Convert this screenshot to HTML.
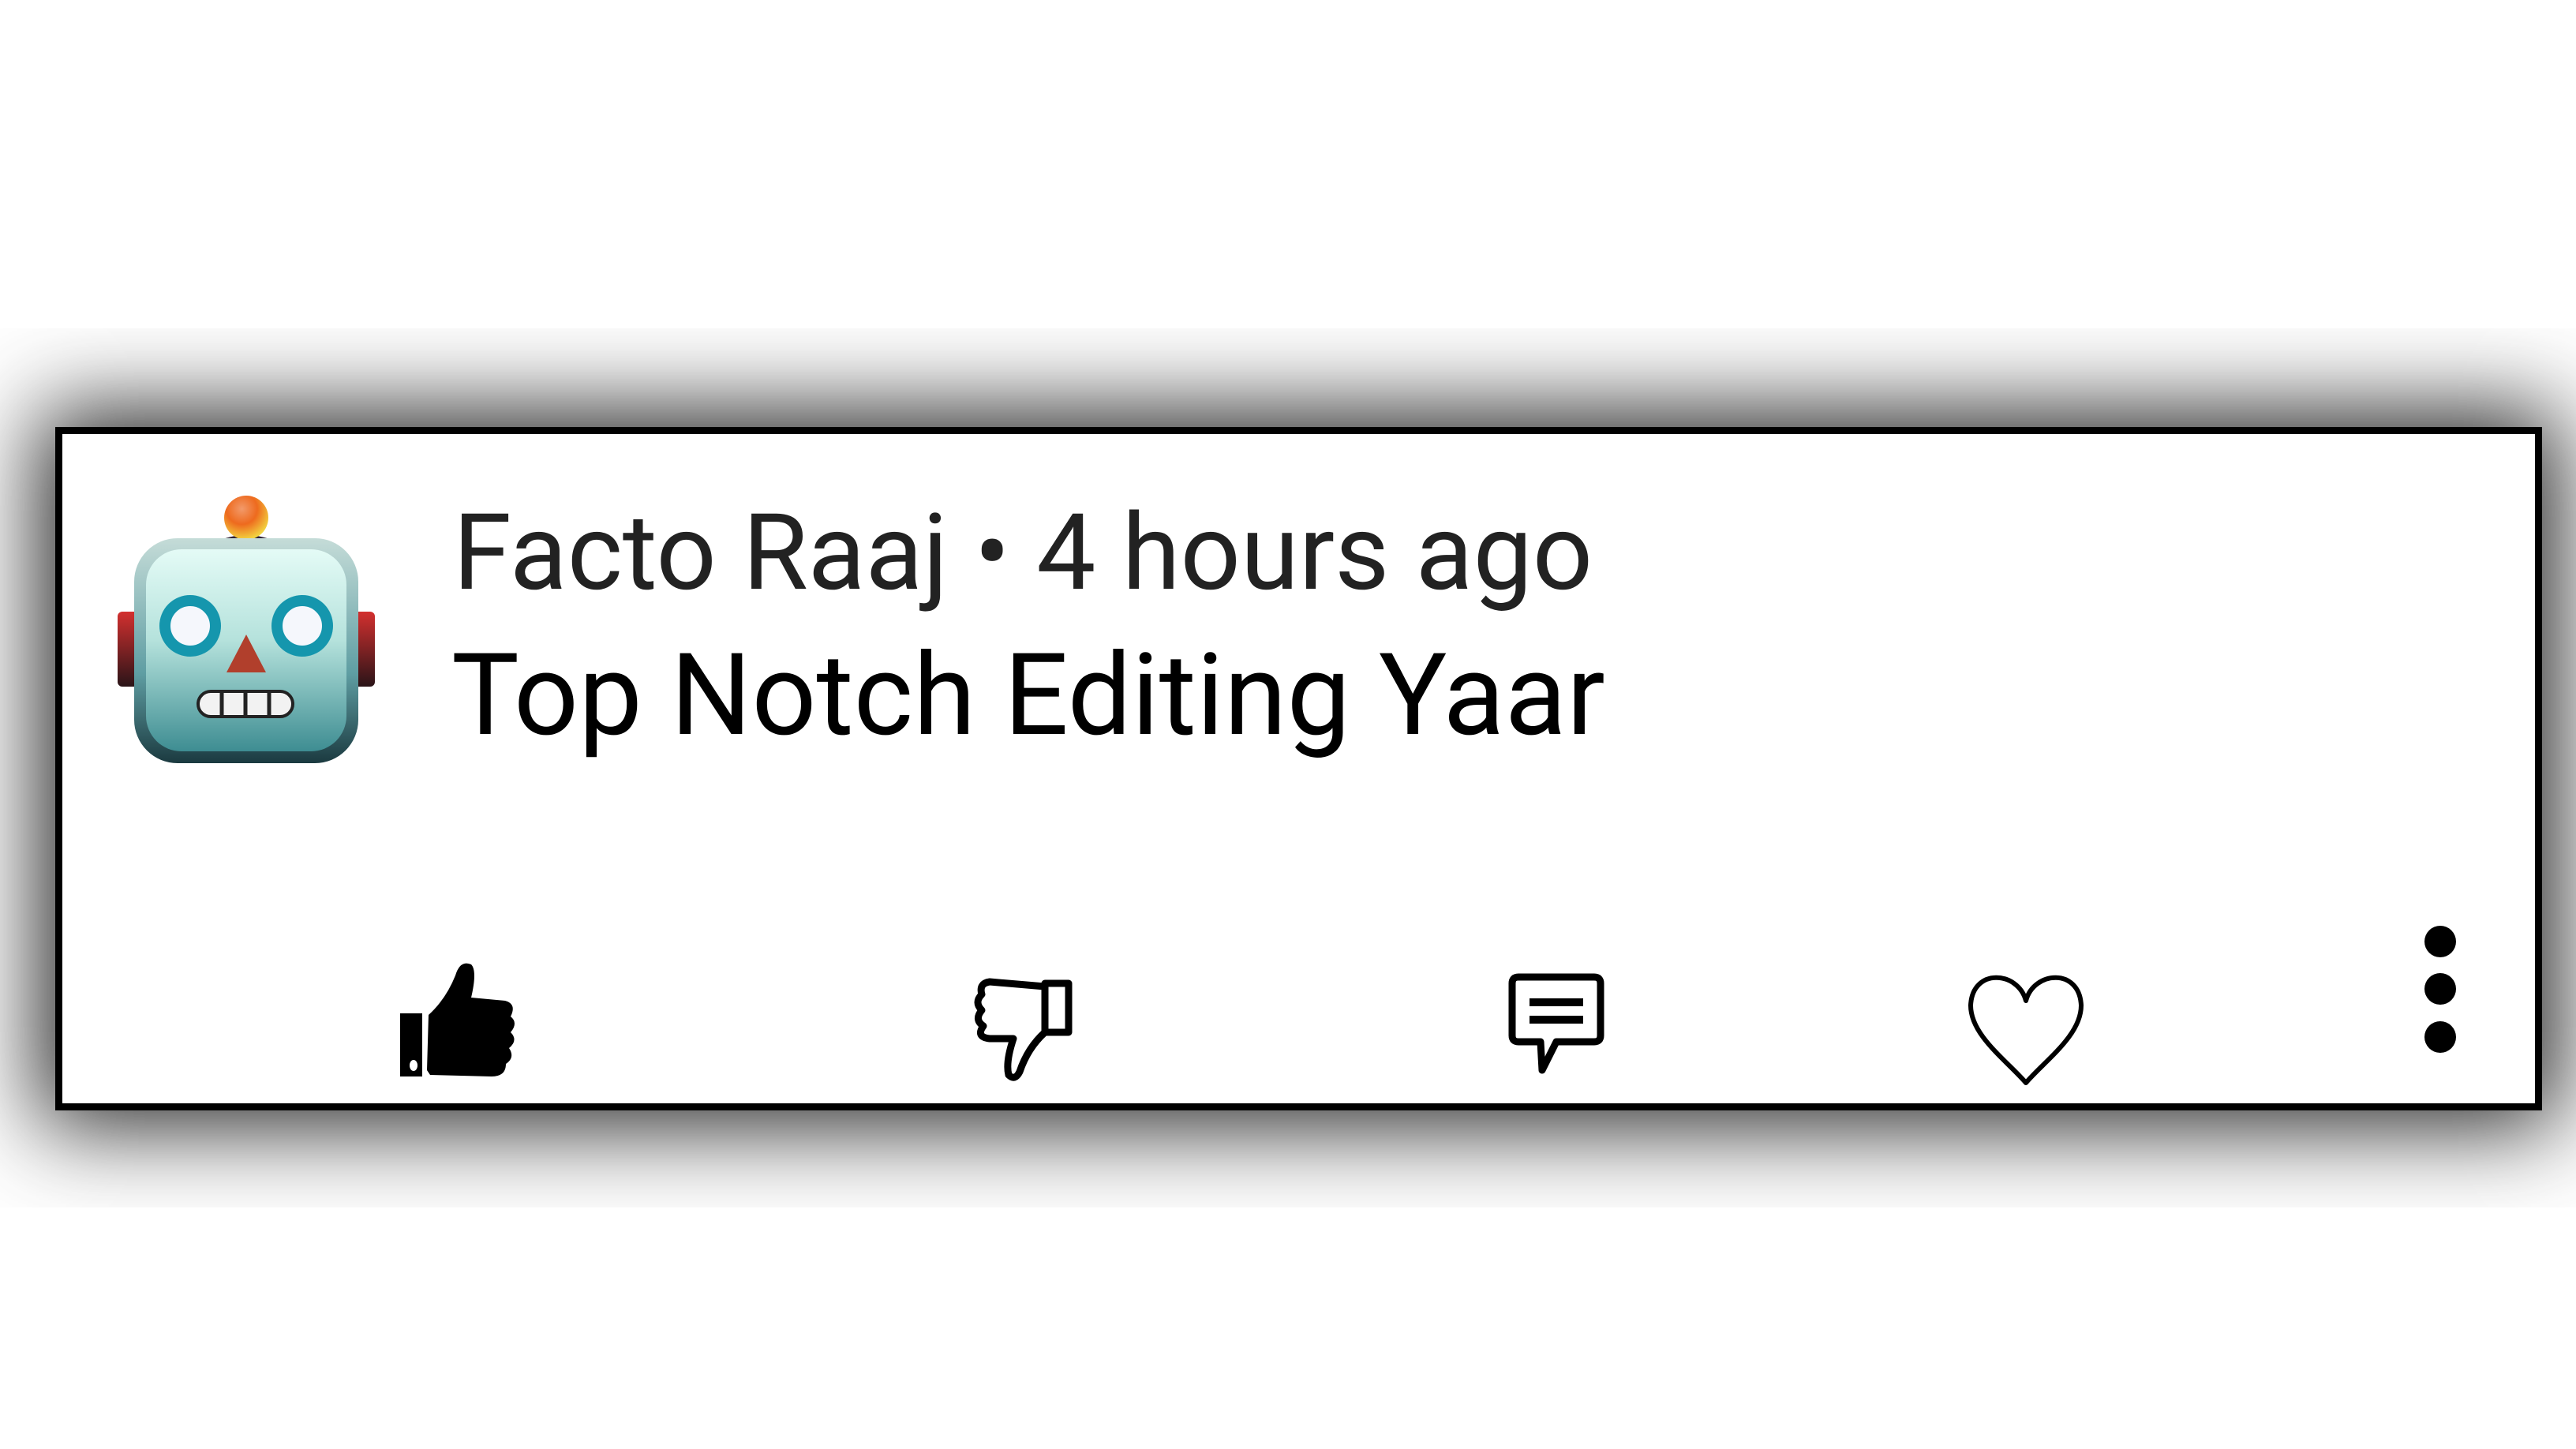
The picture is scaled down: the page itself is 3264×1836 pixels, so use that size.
<!DOCTYPE html>
<html><head><meta charset="utf-8"><style>
html,body{margin:0;padding:0;background:#fff;}
body{width:3264px;height:1836px;position:relative;overflow:hidden;font-family:"Roboto","Liberation Sans",sans-serif;}
.clip{position:absolute;left:0;top:416px;width:3264px;height:1114px;overflow:hidden;}
.card{position:absolute;left:70px;top:125px;width:3133px;height:848px;border:9px solid #000;background:#fff;box-shadow:0 0 110px 20px rgba(0,0,0,0.85);}
.t1{position:absolute;left:574px;top:634px;font-size:134px;color:#222;white-space:nowrap;line-height:1;}
.t2{position:absolute;left:572px;top:810px;font-size:144px;color:#000;white-space:nowrap;line-height:1;}
svg{position:absolute;}
</style></head><body>
<div class="clip"><div class="card"></div></div>

<svg style="left:145px;top:620px" width="335" height="350" viewBox="0 0 335 350">
<defs>
<linearGradient id="face" x1="0" y1="0" x2="0" y2="1"><stop offset="0" stop-color="#e4fbf6"/><stop offset="0.45" stop-color="#b5e2dc"/><stop offset="1" stop-color="#3e8d92"/></linearGradient>
<linearGradient id="rim" x1="0" y1="0" x2="0" y2="1"><stop offset="0" stop-color="#c5dcd8"/><stop offset="0.6" stop-color="#5f9ea3"/><stop offset="1" stop-color="#1b3a40"/></linearGradient>
<linearGradient id="ear" x1="0" y1="0" x2="0" y2="1"><stop offset="0" stop-color="#d3302f"/><stop offset="1" stop-color="#2a1418"/></linearGradient>
<radialGradient id="ball" cx="0.4" cy="0.3" r="0.7"><stop offset="0" stop-color="#f29a6a"/><stop offset="0.5" stop-color="#ee6a1e"/><stop offset="1" stop-color="#f2d440"/></radialGradient>
</defs>
<rect x="4" y="155" width="30" height="95" rx="6" fill="url(#ear)"/>
<rect x="300" y="155" width="30" height="95" rx="6" fill="url(#ear)"/>
<path d="M125 68 Q167 48 209 68 Q167 95 125 68Z" fill="#2e2236"/>
<circle cx="167" cy="36" r="28" fill="url(#ball)"/>
<rect x="25" y="62" width="284" height="285" rx="55" fill="url(#rim)"/>
<rect x="40" y="76" width="254" height="256" rx="45" fill="url(#face)"/>
<circle cx="96" cy="173" r="32" fill="#f5f7fc" stroke="#1596ad" stroke-width="14"/>
<circle cx="238" cy="173" r="32" fill="#f5f7fc" stroke="#1596ad" stroke-width="14"/>
<path d="M167 184 L192 232 L142 232Z" fill="#b13f2c"/>
<rect x="106" y="256" width="120" height="32" rx="16" fill="#f2f2f2" stroke="#222" stroke-width="4"/>
<path d="M136 258V286M166 258V286M196 258V286" stroke="#222" stroke-width="5"/>
</svg>

<div class="t1">Facto Raaj • 4 hours ago</div>
<div class="t2">Top Notch Editing Yaar</div>

<svg style="left:505px;top:1216px" width="152" height="150" viewBox="0 0 152 150">
<rect x="2" y="68" width="28" height="80" fill="#000"/>
<ellipse cx="19" cy="134" rx="5" ry="7" fill="#fff"/>
<path d="M38 70 Q60 50 72 20 Q78 0 92 6 Q100 14 92 48 L135 52 Q150 56 142 72 Q152 80 142 92 Q152 102 140 112 Q148 124 136 132 Q136 148 118 148 L40 146 L36 140Z" fill="#000"/>
</svg>
<svg style="left:1232px;top:1236px" width="130" height="134" viewBox="0 0 130 134">
<g fill="none" stroke="#000" stroke-width="9" stroke-linejoin="round">
<rect x="92" y="10" width="30" height="62"/>
<path d="M92 14 L22 8 Q8 10 12 24 Q2 34 12 44 Q2 56 14 64 Q4 78 22 80 L52 80 Q42 110 46 126 Q54 134 60 122 Q70 92 92 72"/>
</g>
</svg>
<svg style="left:1910px;top:1232px" width="124" height="134" viewBox="0 0 124 134">
<path d="M14 6 H110 Q118 6 118 14 V80 Q118 88 110 88 H62 L44 124 L42 88 H14 Q6 88 6 80 V14 Q6 6 14 6Z" fill="none" stroke="#000" stroke-width="9" stroke-linejoin="round"/>
<path d="M28 38 H96 M28 60 H96" stroke="#000" stroke-width="10"/>
</svg>
<svg style="left:2493px;top:1226px" width="148" height="150" viewBox="0 0 148 150">
<path d="M74 42 C64 4 6 0 4 48 C4 86 50 118 74 146 C98 118 144 86 144 48 C142 0 84 4 74 42Z" fill="none" stroke="#000" stroke-width="6" stroke-linejoin="round"/>
</svg>
<svg style="left:3070px;top:1170px" width="44" height="166" viewBox="0 0 44 166">
<circle cx="22" cy="23" r="20" fill="#000"/><circle cx="22" cy="83" r="20" fill="#000"/><circle cx="22" cy="144" r="20" fill="#000"/>
</svg>
</body></html>
